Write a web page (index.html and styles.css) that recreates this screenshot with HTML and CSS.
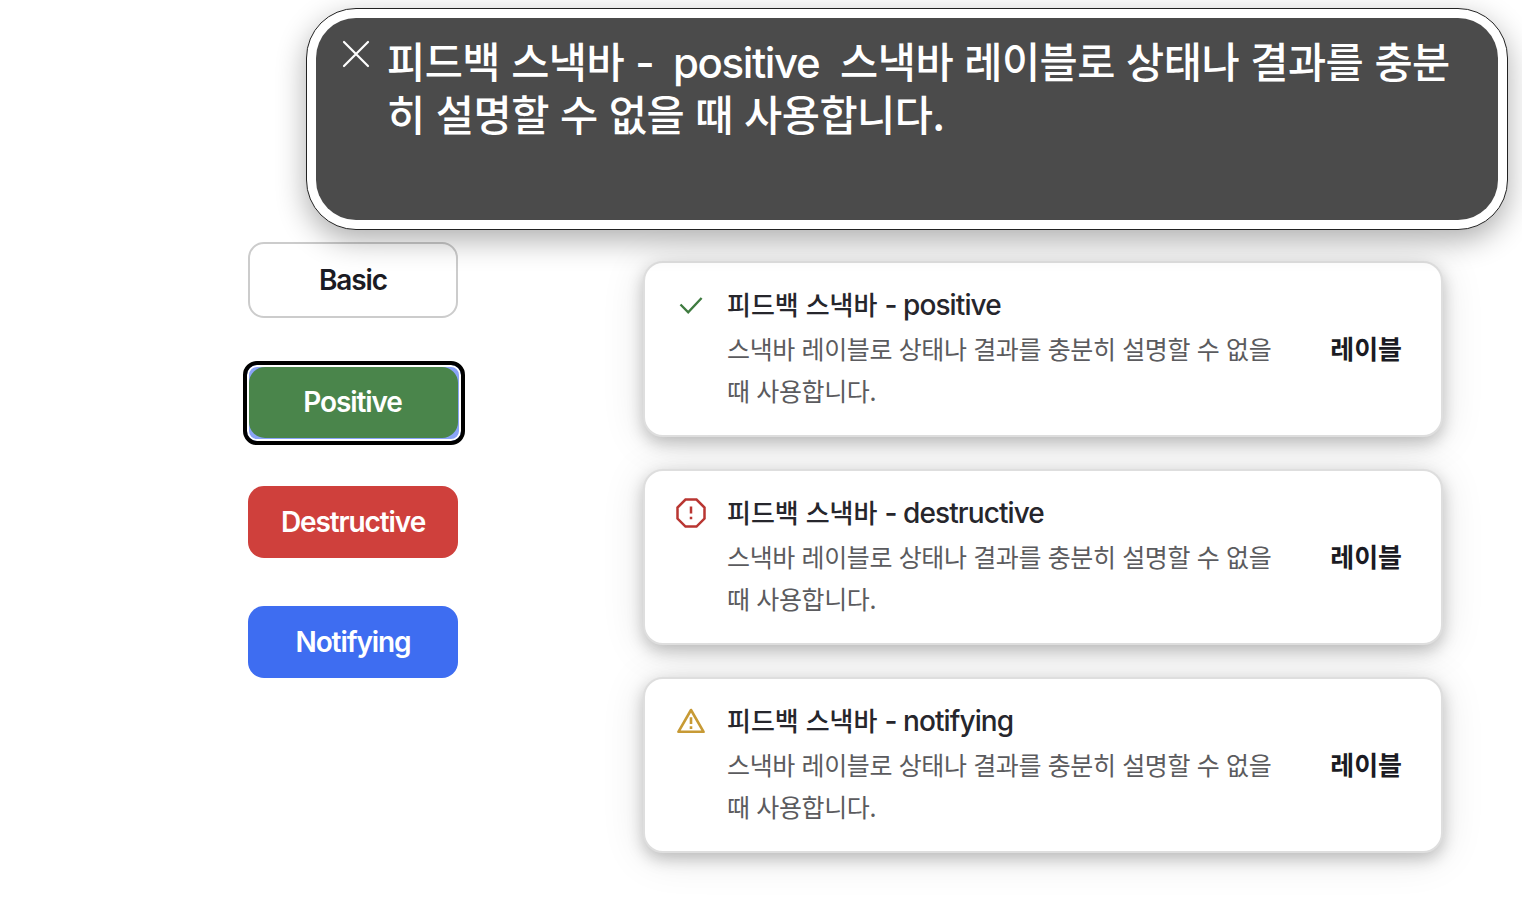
FILE: index.html
```html
<!DOCTYPE html>
<html lang="ko">
<head>
  <meta charset="UTF-8" />
  <meta name="viewport" content="width=device-width, initial-scale=1.0"/>
  <title>Snackbar</title>
  <link rel="stylesheet" href="styles.css">
</head>
<body>
  <main class="page">
    <div class="buttons">
      <button class="btn basic">Basic</button>
      <div class="focus-ring">
        <button class="btn positive">Positive</button>
      </div>
      <button class="btn destructive">Destructive</button>
      <button class="btn notifying">Notifying</button>
    </div>

    <div class="snackbars">
      <div class="snackbar">
        <svg class="icon" viewBox="0 0 32 32" fill="none" stroke="#3f7b40" stroke-width="2.4">
          <path d="M5.5 15.5l7.7 7.8L26.6 9"/>
        </svg>
        <div class="content">
          <p class="title">피드백 스낵바 <span class="latin">- positive</span></p>
          <p class="desc">스낵바 레이블로 상태나 결과를 충분히 설명할 수 없을<br>때 사용합니다.</p>
        </div>
        <button class="action">레이블</button>
      </div>

      <div class="snackbar">
        <svg class="icon" viewBox="0 0 32 32" fill="none" stroke="#b93632" stroke-width="2.5">
          <path d="M10.5 2.6h11l8 8v11l-8 8h-11l-8-8v-11z"/>
          <path d="M16 9.5v7M16 19.8v2.4"/>
        </svg>
        <div class="content">
          <p class="title">피드백 스낵바 <span class="latin">- destructive</span></p>
          <p class="desc">스낵바 레이블로 상태나 결과를 충분히 설명할 수 없을<br>때 사용합니다.</p>
        </div>
        <button class="action">레이블</button>
      </div>

      <div class="snackbar">
        <svg class="icon" viewBox="0 0 32 32" fill="none" stroke="#c79a35" stroke-width="2.6">
          <path d="M16 5L28.6 26.8H3.4z" stroke-linejoin="round"/>
          <path d="M16 12.2v6.8M16 21.2v2.7"/>
        </svg>
        <div class="content">
          <p class="title">피드백 스낵바 <span class="latin">- notifying</span></p>
          <p class="desc">스낵바 레이블로 상태나 결과를 충분히 설명할 수 없을<br>때 사용합니다.</p>
        </div>
        <button class="action">레이블</button>
      </div>
    </div>
  </main>

  <!-- screen reader caption, floats over the page -->
  <div class="caption">
    <div class="caption-inner">
      <svg class="close" viewBox="0 0 28 28" fill="none" stroke="#fff" stroke-width="2.2" stroke-linecap="round">
        <path d="M2 2l24 24M26 2L2 26"/>
      </svg>
      <p class="caption-text">피드백 스낵바 <span class="latin">-&nbsp; positive&nbsp;</span> 스낵바 레이블로 상태나 결과를 충분<br>히 설명할 수 없을 때 사용합니다.</p>
    </div>
  </div>
</body>
</html>
```

FILE: styles.css
```css
* {
  box-sizing: border-box;
}
body {
  margin: 0;
  height: 909px;
  overflow: hidden;
  background: #fff;
  font-family: Inter, "Noto Sans CJK KR", sans-serif;
  color: #26262c;
}
p {
  margin: 0;
  white-space: nowrap;
}
.page {
  display: flex;
  align-items: flex-start;
  padding: 242px 0 0 248px;
}

/* buttons */
.buttons {
  display: flex;
  flex-direction: column;
  gap: 48px;
  width: 210px;
}
.btn {
  display: block;
  width: 210px;
  height: 72px;
  padding: 0;
  border: 0;
  border-radius: 16px;
  color: #fff;
  font-family: Inter, sans-serif;
  font-size: 28px;
  font-weight: 600;
  letter-spacing: -1.1px;
}
.basic {
  height: 76px;
  border: 2px solid #ccc;
  background: #fff;
  color: #1b1b23;
}
.positive {
  height: 71px;
  padding: 0 2px 2px 0;
  background: #4a854b;
}
.destructive {
  background: #cf403c;
}
.notifying {
  background: #3e6df1;
}
.focus-ring {
  width: 222px;
  height: 84px;
  margin: -5px -5px -7px;
  border: 4px solid #000;
  border-radius: 14px;
  background: #8aa4f8;
  box-shadow: inset 0 0 0 2px #fff;
}
.focus-ring .btn {
  width: 209px;
  margin: 2px;
}

/* snackbars */
.snackbars {
  display: flex;
  flex-direction: column;
  gap: 32px;
  width: 800px;
  margin: 19px 0 0 185px;
}
.snackbar {
  display: flex;
  align-items: center;
  height: 176px;
  padding: 0 39px 5px 30px;
  border: 2px solid #dedede;
  border-radius: 20px;
  background: #fff;
  box-shadow: 0 6px 16px rgba(0, 0, 0, 0.22), 0 4px 44px rgba(0, 0, 0, 0.11);
}
.icon {
  flex: none;
  width: 32px;
  height: 32px;
  margin: 26px 20px 0 0;
  align-self: flex-start;
}
.content {
  flex: 1;
}
.title {
  padding-top: 1px;
  margin-bottom: -1px;
  font-size: 26px;
  font-weight: 500;
  line-height: 44px;
}
.title .latin {
  font-size: 28px;
  letter-spacing: -0.9px;
}
.desc {
  font-family: "Noto Sans CJK KR", sans-serif;
  font-size: 25px;
  line-height: 42px;
  letter-spacing: -0.37px;
  color: #5b5b5e;
}
.action {
  padding: 2px 0 0;
  border: 0;
  background: none;
  font-family: "Noto Sans CJK KR", sans-serif;
  font-size: 26px;
  font-weight: 700;
  color: #1b1b23;
}

/* caption panel */
.caption {
  position: absolute;
  top: 8px;
  left: 306px;
  width: 1202px;
  height: 222px;
  padding: 9px;
  border: 1px solid #222;
  border-radius: 50px;
  background: #fff;
  box-shadow: 0 10px 30px rgba(0, 0, 0, 0.32);
}
.caption-inner {
  display: flex;
  height: 100%;
  padding: 17px 26px;
  border-radius: 40px;
  background: #4b4b4b;
}
.close {
  flex: none;
  width: 28px;
  height: 28px;
  margin: 5px 17px 0 0;
}
.caption-text {
  font-family: "Noto Sans CJK KR", sans-serif;
  font-size: 41.5px;
  font-weight: 500;
  line-height: 51px;
  letter-spacing: -0.5px;
  color: #fff;
}
.caption-text .latin {
  font-family: Inter, sans-serif;
  font-size: 42px;
  font-weight: 500;
  letter-spacing: -1.4px;
}
```
